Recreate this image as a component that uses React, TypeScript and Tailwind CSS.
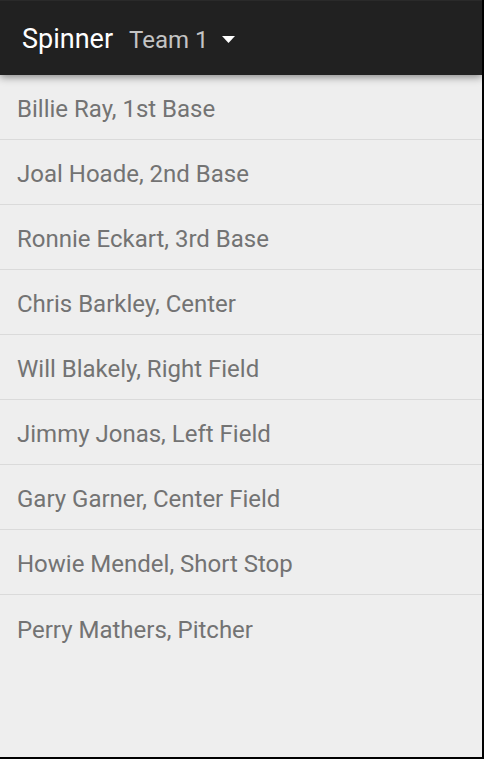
import React from "react";

const players = [
    "Billie Ray, 1st Base",
    "Joal Hoade, 2nd Base",
    "Ronnie Eckart, 3rd Base",
    "Chris Barkley, Center",
    "Will Blakely, Right Field",
    "Jimmy Jonas, Left Field",
    "Gary Garner, Center Field",
    "Howie Mendel, Short Stop",
    "Perry Mathers, Pitcher",
];

export default function App() {
    return (
        <div className="flex h-[759px] w-[484px] flex-col border-r-2 border-b-2 border-black bg-[#eeeeee] font-['Roboto',sans-serif]">
            <div className="relative z-10 flex h-[75px] shrink-0 items-center border-t border-[#2a2a2a] bg-[#212121] pl-[22px] pt-[3px] shadow-[0_2px_8px_rgba(0,0,0,0.45)]">
                <span className="text-[27px] text-white">Spinner</span>
                <span className="ml-[16px] text-[24px] text-[#c4c4c4]">Team 1</span>
                <svg className="ml-[14px] mt-[1px]" width="13" height="8" viewBox="0 0 13 8">
                    <polygon points="0,0 13,0 6.5,7" fill="#ffffff" />
                </svg>
            </div>
            <ul className="flex flex-col">
                {players.map((p, i) => (
                    <li
                        key={p}
                        className={
                            "flex h-[65px] items-center pl-[17px] pt-[4px] text-[24px] text-[#737373] " +
                            (i < players.length - 1 ? "border-b border-[#dadada]" : "")
                        }
                    >
                        {p}
                    </li>
                ))}
            </ul>
        </div>
    );
}
